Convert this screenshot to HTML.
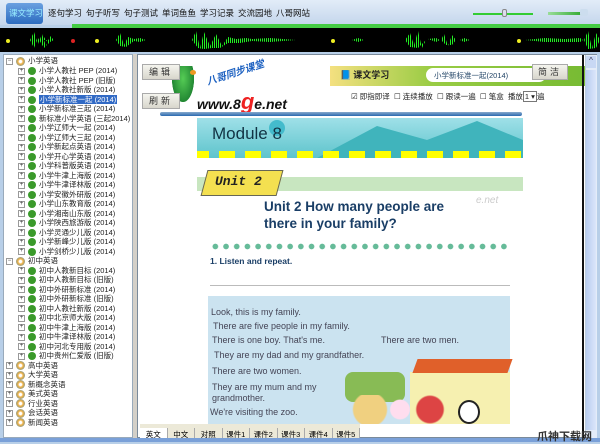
<!DOCTYPE html>
<html><head><meta charset="utf-8"><style>
*{margin:0;padding:0;box-sizing:border-box}
body{width:600px;height:442px;overflow:hidden;position:relative;background:#b8cfe8;font-family:"Liberation Sans","Noto Sans CJK SC",sans-serif}
.abs{position:absolute}
.menu span{position:absolute;top:7px;font-size:8.5px;color:#111}
.tree div{position:absolute;font-size:7.5px;color:#222;white-space:nowrap;height:10px;line-height:10px}
.tree .pm{display:inline-block;width:7px;height:7px;border:1px solid #999;font-size:6px;line-height:5px;text-align:center;vertical-align:middle;margin-right:3px;background:#fff;color:#333}
.tree .ic{display:inline-block;width:8px;height:8px;border-radius:50%;background:#3a9a2a;vertical-align:middle;margin-right:3px}
.tree .fo{display:inline-block;width:9px;height:9px;border-radius:50%;background:radial-gradient(#fff 20%,#f0b040 40%,#4090d0);vertical-align:middle;margin-right:3px}
.btn{position:absolute;background:linear-gradient(#f4f4ee,#d8d6cc);border:1px solid #aaa;font-size:9px;text-align:center;color:#333;letter-spacing:3px}
.txt{position:absolute;font-size:9px;color:#445;white-space:nowrap}
.tabs span{display:inline-block;width:27.5px;text-align:center;font-size:7.5px;border-right:1px solid #aaa;height:14px;line-height:14px}
</style></head><body>
<div class="abs" style="left:0;top:0;width:600px;height:25px;background:linear-gradient(#e2ecf8,#c4d6ec)"></div>
<div class="abs" style="left:6px;top:3px;width:37px;height:21px;background:linear-gradient(#6aa0e0,#2c6cc0);border-radius:3px"></div>
<div class="menu">
<span style="left:9px;color:#9ef">课文学习</span><span style="left:48px">逐句学习</span><span style="left:86px">句子听写</span><span style="left:124px">句子测试</span><span style="left:162px">单词鱼鱼</span><span style="left:200px">学习记录</span><span style="left:238px">交流园地</span><span style="left:276px">八哥网站</span>
</div>
<div class="abs" style="left:473px;top:13px;width:60px;height:2px;background:#3c3"></div>
<div class="abs" style="left:502px;top:9px;width:5px;height:8px;background:#dde;border:1px solid #888;border-radius:2px"></div>
<div class="abs" style="left:548px;top:12px;width:34px;height:3px;background:linear-gradient(90deg,#9d9,#3a3)"></div>
<div class="abs" style="left:580px;top:9px;width:8px;height:7px;background:#cde;border-radius:2px"></div>
<div class="abs" style="left:72px;top:24px;width:528px;height:4px;background:#4c4"></div>
<div class="abs" style="left:0;top:28px;width:600px;height:24px;background:#000"></div>
<svg class="abs" style="left:0;top:28px" width="600" height="24">
<defs><pattern id="p" width="2" height="24" patternUnits="userSpaceOnUse"><rect width="1" height="24" fill="#2e2"/></pattern></defs>
<g fill="url(#p)">
<polygon points="30,12 34,4 38,16 42,6 46,18 50,8 54,12 50,14 44,20 38,10 34,20"/>
<polygon points="40,12 44,9 48,15 52,12"/>
<polygon points="116,12 120,5 124,17 128,9 134,11 140,10 146,12 140,14 134,13 126,19 120,18"/>
<polygon points="192,12 196,3 200,20 204,4 210,18 216,6 222,18 228,9 236,11 246,10 252,11 270,10 296,12 270,14 252,13 240,15 228,15 220,20 212,20 204,21 198,20"/>
<polygon points="352,12 358,10 364,12 358,14"/>
<polygon points="405,12 410,5 414,17 418,3 422,20 426,12 418,20 410,19"/>
<polygon points="428,11 436,10 440,12 436,14"/>
<polygon points="441,12 444,6 448,18 452,7 456,12 452,17 446,17"/>
<polygon points="460,12 464,10 470,12 464,14"/>
<polygon points="525,12 545,10 565,11 580,10 583,12 580,14 545,14"/>
<polygon points="584,12 588,3 592,20 596,5 600,12 596,20 588,21"/>
</g>
<g><circle cx="8" cy="13" r="2" fill="#ee2"/><circle cx="73" cy="13" r="2" fill="#d22"/><circle cx="97" cy="13" r="2" fill="#ee2"/><circle cx="333" cy="13" r="2" fill="#ee2"/><circle cx="519" cy="13" r="2" fill="#ee2"/></g>
</svg>
<div class="abs" style="left:3px;top:54px;width:130px;height:384px;background:#fff;border:1px solid #9ab"></div>
<div class="abs" style="left:133px;top:54px;width:4px;height:384px;background:#d4d0c8"></div>
<div class="tree">
<div style="left:6px;top:56px"><span class="pm">−</span><span class="fo"></span>小学英语</div>
<div style="left:18px;top:66px"><span class="pm">+</span><span class="ic"></span>小学人教社 PEP (2014)</div>
<div style="left:18px;top:75.5px"><span class="pm">+</span><span class="ic"></span>小学人教社 PEP (旧版)</div>
<div style="left:18px;top:85px"><span class="pm">+</span><span class="ic"></span>小学人教社新版 (2014)</div>
<div style="left:18px;top:94.5px"><span class="pm">+</span><span class="ic"></span><span style="background:#316ac5;color:#fff;padding:0 1px">小学新标准一起 (2014)</span></div>
<div style="left:18px;top:104px"><span class="pm">+</span><span class="ic"></span>小学新标准三起 (2014)</div>
<div style="left:18px;top:113.5px"><span class="pm">+</span><span class="ic"></span>新标准小学英语 (三起2014)</div>
<div style="left:18px;top:123px"><span class="pm">+</span><span class="ic"></span>小学辽师大一起 (2014)</div>
<div style="left:18px;top:132.5px"><span class="pm">+</span><span class="ic"></span>小学辽师大三起 (2014)</div>
<div style="left:18px;top:142px"><span class="pm">+</span><span class="ic"></span>小学新起点英语 (2014)</div>
<div style="left:18px;top:151.5px"><span class="pm">+</span><span class="ic"></span>小学开心学英语 (2014)</div>
<div style="left:18px;top:161px"><span class="pm">+</span><span class="ic"></span>小学科普版英语 (2014)</div>
<div style="left:18px;top:170.5px"><span class="pm">+</span><span class="ic"></span>小学牛津上海版 (2014)</div>
<div style="left:18px;top:180px"><span class="pm">+</span><span class="ic"></span>小学牛津译林版 (2014)</div>
<div style="left:18px;top:189.5px"><span class="pm">+</span><span class="ic"></span>小学安徽外研版 (2014)</div>
<div style="left:18px;top:199px"><span class="pm">+</span><span class="ic"></span>小学山东教育版 (2014)</div>
<div style="left:18px;top:208.5px"><span class="pm">+</span><span class="ic"></span>小学湘南山东版 (2014)</div>
<div style="left:18px;top:218px"><span class="pm">+</span><span class="ic"></span>小学陕西旅游版 (2014)</div>
<div style="left:18px;top:227.5px"><span class="pm">+</span><span class="ic"></span>小学灵通少儿版 (2014)</div>
<div style="left:18px;top:237px"><span class="pm">+</span><span class="ic"></span>小学新峰少儿版 (2014)</div>
<div style="left:18px;top:246.5px"><span class="pm">+</span><span class="ic"></span>小学剑桥少儿版 (2014)</div>
<div style="left:6px;top:256px"><span class="pm">−</span><span class="fo"></span>初中英语</div>
<div style="left:18px;top:265.5px"><span class="pm">+</span><span class="ic"></span>初中人教新目标 (2014)</div>
<div style="left:18px;top:275px"><span class="pm">+</span><span class="ic"></span>初中人教新目标 (旧版)</div>
<div style="left:18px;top:284.5px"><span class="pm">+</span><span class="ic"></span>初中外研新标准 (2014)</div>
<div style="left:18px;top:294px"><span class="pm">+</span><span class="ic"></span>初中外研新标准 (旧版)</div>
<div style="left:18px;top:303.5px"><span class="pm">+</span><span class="ic"></span>初中人教社新版 (2014)</div>
<div style="left:18px;top:313px"><span class="pm">+</span><span class="ic"></span>初中北京师大版 (2014)</div>
<div style="left:18px;top:322.5px"><span class="pm">+</span><span class="ic"></span>初中牛津上海版 (2014)</div>
<div style="left:18px;top:332px"><span class="pm">+</span><span class="ic"></span>初中牛津译林版 (2014)</div>
<div style="left:18px;top:341.5px"><span class="pm">+</span><span class="ic"></span>初中河北专用版 (2014)</div>
<div style="left:18px;top:351px"><span class="pm">+</span><span class="ic"></span>初中贵州仁爱版 (旧版)</div>
<div style="left:6px;top:360.5px"><span class="pm">+</span><span class="fo"></span>高中英语</div>
<div style="left:6px;top:370px"><span class="pm">+</span><span class="fo"></span>大学英语</div>
<div style="left:6px;top:379.5px"><span class="pm">+</span><span class="fo"></span>新概念英语</div>
<div style="left:6px;top:389px"><span class="pm">+</span><span class="fo"></span>美式英语</div>
<div style="left:6px;top:398.5px"><span class="pm">+</span><span class="fo"></span>行业英语</div>
<div style="left:6px;top:408px"><span class="pm">+</span><span class="fo"></span>会话英语</div>
<div style="left:6px;top:417.5px"><span class="pm">+</span><span class="fo"></span>新闻英语</div>
</div>
<div class="abs" style="left:137px;top:54px;width:460px;height:384px;background:#fff;border:1px solid #7a8a9a"></div>
<div class="abs" style="left:172px;top:66px;width:22px;height:36px;background:radial-gradient(ellipse at 50% 35%,#5c5,#283 70%,transparent 72%)"></div>
<div class="abs" style="left:190px;top:70px;width:6px;height:5px;background:#e92;border-radius:50%"></div>
<div class="btn" style="left:142px;top:64px;width:38px;height:16px;line-height:14px">编辑</div>
<div class="btn" style="left:142px;top:93px;width:38px;height:16px;line-height:14px">刷新</div>
<div class="abs" style="left:205px;top:64px;font:italic bold 10px 'Liberation Sans','Noto Sans CJK SC',sans-serif;color:#1a5fc0;transform:rotate(-18deg)">八哥同步课堂</div>
<div class="abs" style="left:197px;top:89px;font:italic bold 14px 'Liberation Sans',sans-serif;color:#111">www.8<span style="color:#e22;font-size:22px">g</span>e.net</div>
<div class="abs" style="left:160px;top:112px;width:362px;height:4px;background:linear-gradient(#8ac,#2a6ab0);border-radius:2px"></div>
<div class="abs" style="left:330px;top:66px;width:255px;height:20px;background:linear-gradient(90deg,#f4e080,#9c4 40%,#7b3)"></div>
<div class="abs" style="left:340px;top:68px;font:bold 9px 'Noto Sans CJK SC',sans-serif;color:#222">📘 课文学习</div>
<div class="abs" style="left:426px;top:68px;width:120px;height:14px;background:#fff;border-radius:7px;font-size:7.5px;color:#246;padding:2px 8px">小学新标准一起(2014)</div>
<div class="btn" style="left:532px;top:64px;width:36px;height:16px;line-height:14px">简洁</div>
<div class="txt" style="left:351px;top:91px;font-size:7.5px;color:#222">☑ 即指即译 &nbsp;☐ 连续播放 &nbsp;☐ 跟读一遍 &nbsp;☐ 笔盒 &nbsp;播放<span style="border:1px solid #777;padding:0 1px">1 ▾</span>遍</div>
<div class="abs" style="left:197px;top:118px;width:326px;height:40px;background:linear-gradient(#9fe0e8,#5ec4cc)"></div>
<svg class="abs" style="left:197px;top:118px" width="326" height="40"><polygon points="120,40 180,8 230,22 280,3 326,22 326,40" fill="#40b4bc"/><circle cx="80" cy="10" r="8" fill="#4bc"/>
<g fill="#ff0"><rect x="0" y="33" width="12" height="7"/><rect x="22" y="33" width="16" height="7"/><rect x="48" y="33" width="16" height="7"/><rect x="74" y="33" width="16" height="7"/><rect x="100" y="33" width="16" height="7"/><rect x="126" y="33" width="16" height="7"/><rect x="152" y="33" width="16" height="7"/><rect x="178" y="33" width="16" height="7"/><rect x="204" y="33" width="16" height="7"/><rect x="230" y="33" width="16" height="7"/><rect x="256" y="33" width="16" height="7"/><rect x="282" y="33" width="16" height="7"/><rect x="308" y="33" width="16" height="7"/></g></svg>
<div class="abs" style="left:212px;top:124px;font-size:17px;color:#134;">Module 8</div>
<div class="abs" style="left:197px;top:177px;width:326px;height:14px;background:#c8e6c0"></div>
<div class="abs" style="left:204px;top:170px;width:76px;height:26px;background:#f4e050;transform:skewX(-15deg);border:1px solid #665"></div>
<div class="abs" style="left:215px;top:174px;font:italic bold 13px 'Liberation Mono',monospace;color:#222">Unit 2</div>
<div class="abs" style="left:264px;top:198px;font:bold 13.5px 'Liberation Sans',sans-serif;color:#1a3e66;line-height:17px">Unit 2 How many people are<br>there in your family?</div>
<div class="abs" style="left:476px;top:195px;font:italic 10px 'Liberation Sans',sans-serif;color:#ccc">e.net</div>
<div class="abs" style="left:210px;top:243px;width:300px;height:7px;background:radial-gradient(circle,#6b9 2.6px,transparent 3px) 0 0/10.7px 7px"></div>
<div class="abs" style="left:210px;top:256px;font:bold 8.5px 'Liberation Sans',sans-serif;color:#1a3e66">1. Listen and repeat.</div>
<div class="abs" style="left:210px;top:285px;width:300px;height:1px;background:#bbb"></div>
<div class="abs" style="left:208px;top:296px;width:302px;height:128px;background:#cbe3f0"></div>
<div class="txt" style="left:211px;top:307px">Look, this is my family.</div>
<div class="txt" style="left:213px;top:321px">There are five people in my family.</div>
<div class="txt" style="left:212px;top:335px">There is one boy. That's me.</div>
<div class="txt" style="left:381px;top:335px">There are two men.</div>
<div class="txt" style="left:214px;top:350px">They are my dad and my grandfather.</div>
<div class="txt" style="left:212px;top:366px">There are two women.</div>
<div class="txt" style="left:212px;top:382px;line-height:11px">They are my mum and my<br>grandmother.</div>
<div class="txt" style="left:210px;top:407px">We're visiting the zoo.</div>
<div class="abs" style="left:410px;top:372px;width:100px;height:52px;background:#f6f0b0"></div>
<div class="abs" style="left:415px;top:359px;width:95px;height:14px;background:#e0602a;transform:skewX(-20deg)"></div>
<div class="abs" style="left:345px;top:372px;width:60px;height:30px;background:#8b5;border-radius:8px"></div>
<div class="abs" style="left:350px;top:395px;width:100px;height:29px;background:radial-gradient(circle at 20% 50%,#f0d080 20%,transparent 22%),radial-gradient(circle at 50% 50%,#fde 18%,transparent 20%),radial-gradient(circle at 80% 50%,#d44 16%,transparent 18%)"></div>
<div class="abs" style="left:458px;top:400px;width:22px;height:24px;background:#fff;border:2px solid #222;border-radius:50%"></div>
<div class="abs" style="left:582px;top:55px;width:2px;height:383px;background:#111"></div>
<div class="abs" style="left:585px;top:55px;width:12px;height:383px;background:#e4ecf8;border-left:1px solid #bcd"></div>
<div class="abs" style="left:586px;top:56px;width:10px;height:12px;background:#c8d8f4;font-size:8px;text-align:center;color:#335">^</div>
<div class="abs" style="left:586px;top:70px;width:10px;height:360px;background:linear-gradient(90deg,#b8cdf0,#dce6fa)"></div>
<div class="abs tabs" style="left:140px;top:424px;height:14px;background:#ece9d8;white-space:nowrap"><span style="background:#fff">英文</span><span>中文</span><span>对照</span><span>课件1</span><span>课件2</span><span>课件3</span><span>课件4</span><span>课件5</span></div>
<div class="abs" style="left:0;top:438px;width:600px;height:4px;background:#7aa0d8"></div>
<div class="abs" style="left:537px;top:428px;font:bold 11px 'Noto Sans CJK SC',sans-serif;color:#333">爪神下载网</div>
</body></html>
